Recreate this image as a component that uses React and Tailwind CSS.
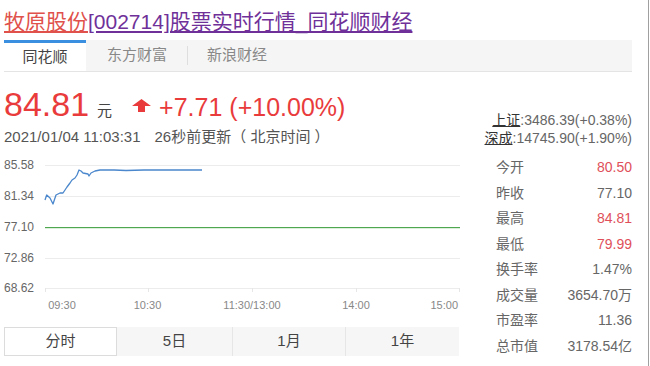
const linePts = [
  [41, 53], [42.7, 48], [46, 51], [49, 57], [52, 48], [56, 46], [59, 46],
  [61, 43], [63, 40], [66, 36], [68, 33], [71, 31], [73, 28], [75, 23],
  [77, 24], [79, 26], [84, 27], [85, 29], [87, 26], [91, 24], [96, 23],
  [110, 23], [122, 23.5], [140, 23], [170, 23], [198, 23],
];

const yLabels = [
  ["85.58", 18],
  ["81.34", 49],
  ["77.10", 80],
  ["72.86", 111],
  ["68.62", 141],
];

const xLabels = [
  ["09:30", 58, "middle"],
  ["10:30", 143.5, "middle"],
  ["11:30/13:00", 248, "middle"],
  ["14:00", 352, "middle"],
  ["15:00", 454, "end"],
];

const stats = [
  ["今开", "80.50", true],
  ["昨收", "77.10", false],
  ["最高", "84.81", true],
  ["最低", "79.99", true],
  ["换手率", "1.47%", false],
  ["成交量", "3654.70万", false],
  ["市盈率", "11.36", false],
  ["总市值", "3178.54亿", false],
];

function Chart() {
  return (
    <svg width="456" height="168" className="block">
      {yLabels.map(([t, y]) => (
        <g key={t}>
          {t !== "77.10" && (
            <line x1="41" x2="456" y1={y + 0.5} y2={y + 0.5} stroke="#ececec" strokeWidth="1" />
          )}
          <text x="0" y={y + 4} fontSize="12" fill="#666">
            {t}
          </text>
        </g>
      ))}
      {/* pre-close line */}
      <rect x="41" y="80" width="415" height="1.2" fill="#4fa84f" />
      {[41, 144, 248, 352, 455].map((x) => (
        <line key={x} x1={x + 0.5} x2={x + 0.5} y1="141" y2="145" stroke="#e6e6e6" />
      ))}
      {xLabels.map(([t, x, a]) => (
        <text key={t} x={x} y="162" fontSize="11" fill="#888" textAnchor={a}>
          {t}
        </text>
      ))}
      <polyline
        points={linePts.map((p) => p.join(",")).join(" ")}
        fill="none"
        stroke="#4a87cc"
        strokeWidth="1.3"
        strokeLinejoin="round"
      />
    </svg>
  );
}

export default function App() {
  return (
    <div className="w-[649px] h-[366px] overflow-hidden bg-white border-r border-[#a0a0a0] pl-1 pr-[16px] pt-[7px] font-['Liberation_Sans','Noto_Sans_CJK_SC',sans-serif]">
      <h1 className="h-[30px] text-[21px] leading-[30px] whitespace-nowrap">
        <a href="#" className="text-[#e0514b] underline underline-offset-2">
          牧原股份
        </a>
        <a href="#" className="text-[#6f3199] underline underline-offset-2">
          [002714]股票实时行情_同花顺财经
        </a>
      </h1>

      <div className="mt-[3px] h-[32px] flex bg-[#f5f5f5] border-b border-[#e4e4e4] text-[15px] text-[#888]">
        <div className="w-[82px] bg-white border-t-[3px] border-[#3b8fe0] flex items-center justify-center text-[#444]">
          同花顺
        </div>
        <div className="pl-[21px] pr-5 flex items-center">东方财富</div>
        <div className="flex items-center">
          <span className="w-px h-[19px] bg-[#dedede]" />
        </div>
        <div className="pl-[19px] flex items-center">新浪财经</div>
      </div>

      <div className="flex">
        <div className="w-[456px]">
          <div className="mt-[12px] h-[40px] flex items-baseline leading-[40px] text-[#e93b3b]">
            <span className="text-[34px]">84.81</span>
            <span className="ml-2 text-[15px] text-[#444]">元</span>
            <svg width="19" height="13" viewBox="0 0 19 13" className="ml-5 relative top-[-4px]">
              <polygon points="9.5,0 19,7 13,7 13,13 6,13 6,7 0,7" fill="#e93b3b" />
            </svg>
            <span className="ml-2 text-[25px]">+7.71 (+10.00%)</span>
          </div>
          <div className="mt-[3px] h-[20px] leading-[20px] text-[15px] text-[#555] whitespace-nowrap">
            <span>2021/01/04 11:03:31</span>
            <span className="ml-[14px]">26秒前更新（ 北京时间 ）</span>
          </div>
          <Chart />
          <div className="mt-[12px] h-[29px] w-[455px] flex text-[15px] text-[#444]">
            <div className="w-[113px] bg-white border border-[#dcdcdc] flex items-center justify-center">分时</div>
            <div className="w-[115px] bg-[#f6f6f6] flex items-center justify-center">5日</div>
            <div className="w-[113px] bg-[#f6f6f6] border-l border-[#e6e6e6] flex items-center justify-center">1月</div>
            <div className="w-[114px] bg-[#f6f6f6] border-l border-[#e6e6e6] flex items-center justify-center">1年</div>
          </div>
        </div>

        <div className="w-[163px] ml-auto pt-[39px] text-[14px] text-[#666]">
          <div className="h-[18px] leading-[18px] text-right whitespace-nowrap">
            <span className="underline text-[#333]">上证</span>:3486.39(+0.38%)
          </div>
          <div className="h-[18px] leading-[18px] text-right whitespace-nowrap">
            <span className="underline text-[#333]">深成</span>:14745.90(+1.90%)
          </div>
          <div className="mt-[8px]">
            {stats.map(([k, v, red]) => (
              <div key={k} className="h-[25.5px] pl-[27px] flex items-center justify-between">
                <span>{k}</span>
                <span className={red ? "text-[#e0505a]" : "text-[#666]"}>{v}</span>
              </div>
            ))}
          </div>
        </div>
      </div>
    </div>
  );
}
